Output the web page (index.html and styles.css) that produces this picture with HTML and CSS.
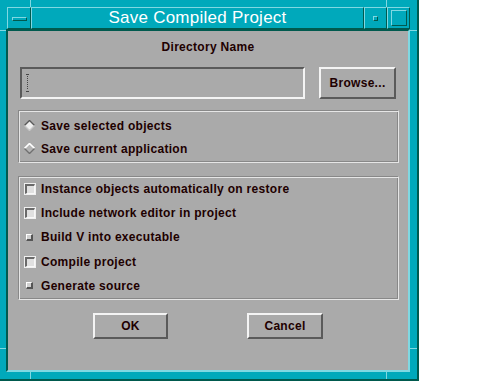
FILE: index.html
```
<!DOCTYPE html>
<html>
<head>
<meta charset="utf-8">
<link rel="stylesheet" href="styles.css">
</head>
<body>
<div class="window">
  <span class="tick tv tl-v"></span>
  <span class="tick th tl-h"></span>
  <span class="tick tv tr-v"></span>
  <span class="tick th tr-h"></span>
  <span class="tick tv bl-v"></span>
  <span class="tick th bl-h"></span>
  <span class="tick tv br-v"></span>
  <span class="tick th br-h"></span>
  <div class="titlebar">
    <div class="tb-btn menu"><span class="menu-bar"></span></div>
    <div class="tb-btn title">Save Compiled Project</div>
    <div class="tb-btn mini"><span class="mini-dot"></span></div>
    <div class="tb-btn maxi"><span class="maxi-box"></span></div>
  </div>
  <div class="panel">
    <div class="dirlabel">Directory Name</div>
    <div class="dirrow">
      <div class="field">
        <svg class="ibeam" width="3" height="18" viewBox="0 0 3 18"><rect x="0" y="0" width="3" height="1" fill="#444"/><rect x="1" y="2" width="1" height="1" fill="#444"/><rect x="1" y="4" width="1" height="1" fill="#444"/><rect x="1" y="6" width="1" height="1" fill="#444"/><rect x="1" y="8" width="1" height="1" fill="#444"/><rect x="1" y="10" width="1" height="1" fill="#444"/><rect x="1" y="12" width="1" height="1" fill="#444"/><rect x="1" y="14" width="1" height="1" fill="#444"/><rect x="0" y="17" width="3" height="1" fill="#444"/></svg>
      </div>
      <div class="btn browse">Browse...</div>
    </div>
    <div class="frame radios">
      <div class="item">
        <svg class="diamond" width="11" height="11" viewBox="0 0 11 11"><polygon points="5.5,0.5 10.5,5.5 5.5,10.5 0.5,5.5" fill="#f0f0f0"/><polyline points="0.5,5.5 5.5,0.5 10.5,5.5" fill="none" stroke="#5a5a5a" stroke-width="1.4"/><polyline points="0.5,5.5 5.5,10.5 10.5,5.5" fill="none" stroke="#c8c8c8" stroke-width="1.4"/></svg>
        <span>Save selected objects</span>
      </div>
      <div class="item">
        <svg class="diamond" width="11" height="11" viewBox="0 0 11 11"><polygon points="5.5,0.5 10.5,5.5 5.5,10.5 0.5,5.5" fill="#b4b4b4"/><polyline points="0.5,5.5 5.5,0.5 10.5,5.5" fill="none" stroke="#ffffff" stroke-width="1.6"/><polyline points="0.5,5.5 5.5,10.5 10.5,5.5" fill="none" stroke="#707070" stroke-width="1.4"/></svg>
        <span>Save current application</span>
      </div>
    </div>
    <div class="frame checks">
      <div class="item"><span class="cb"></span><span>Instance objects automatically on restore</span></div>
      <div class="item"><span class="cb"></span><span>Include network editor in project</span></div>
      <div class="item"><span class="cb on"></span><span>Build V into executable</span></div>
      <div class="item"><span class="cb"></span><span>Compile project</span></div>
      <div class="item"><span class="cb on"></span><span>Generate source</span></div>
    </div>
    <div class="buttons">
      <div class="btn ok">OK</div>
      <div class="btn cancel">Cancel</div>
    </div>
  </div>
</div>
</body>
</html>
```
FILE: styles.css
```
html, body {
  margin: 0;
  padding: 0;
  background: #ffffff;
}
body {
  font-family: "Liberation Sans", Arial, sans-serif;
}
.window {
  position: relative;
  width: 419px;
  height: 381px;
  box-sizing: border-box;
  background: #00a9bb;
  border-right: 2px solid #005a4e;
  border-bottom: 2px solid #005a4e;
  padding: 7px 7px 7px 6px;
  display: flex;
  flex-direction: column;
}
.tick {
  position: absolute;
  background: #80d8e2;
}
.tv { width: 1px; }
.th { height: 1px; }
.tl-v { left: 30px; top: 0; height: 7px; }
.tr-v { left: 386px; top: 0; height: 7px; }
.tl-h { left: 0; top: 30px; width: 6px; }
.tr-h { left: 410px; top: 30px; width: 7px; }
.bl-v { left: 30px; top: 372px; height: 7px; }
.br-v { left: 386px; top: 372px; height: 7px; }
.bl-h { left: 0; top: 348px; width: 6px; }
.br-h { left: 410px; top: 348px; width: 7px; }

.titlebar {
  display: flex;
  height: 22px;
  margin-left: 1px;
  flex: none;
}
.tb-btn {
  box-sizing: border-box;
  height: 22px;
  border-top: 1px solid #80d8e2;
  border-left: 1px solid #80d8e2;
  border-right: 1px solid #005a4e;
  border-bottom: 1px solid #005a4e;
  display: flex;
  align-items: center;
  justify-content: center;
}
.menu { width: 24px; }
.menu-bar {
  width: 15px;
  height: 4px;
  box-sizing: border-box;
  border-top: 1px solid #80d8e2;
  border-left: 1px solid #80d8e2;
  border-right: 1px solid #005a4e;
  border-bottom: 1px solid #005a4e;
  margin-top: 1px;
}
.title {
  flex: 1;
  color: #ffffff;
  font-size: 17px;
  letter-spacing: 0.25px;
  line-height: 20px;
}
.mini { width: 23px; }
.mini-dot {
  width: 5px;
  height: 5px;
  box-sizing: border-box;
  border-top: 1px solid #80d8e2;
  border-left: 1px solid #80d8e2;
  border-right: 1px solid #005a4e;
  border-bottom: 1px solid #005a4e;
  margin-top: 1px;
}
.maxi { width: 23px; }
.maxi-box {
  width: 16px;
  height: 16px;
  box-sizing: border-box;
  border-top: 1px solid #80d8e2;
  border-left: 1px solid #80d8e2;
  border-right: 1px solid #005a4e;
  border-bottom: 1px solid #005a4e;
}

.panel {
  flex: 1;
  box-sizing: border-box;
  background: #aaaaaa;
  border-top: 2px solid #005a4e;
  border-left: 2px solid #005a4e;
  border-right: 2px solid #80d8e2;
  border-bottom: 2px solid #80d8e2;
  display: flex;
  flex-direction: column;
  padding-top: 9px;
  color: #1e0000;
  font-size: 12px;
  font-weight: bold;
  letter-spacing: 0.3px;
}
.dirlabel {
  height: 14px;
  line-height: 14px;
  text-align: center;
}
.dirrow {
  display: flex;
  gap: 14px;
  margin-top: 13px;
  padding-left: 12px;
  height: 32px;
}
.field {
  width: 285px;
  height: 32px;
  box-sizing: border-box;
  border-top: 2px solid #5a5a5a;
  border-left: 2px solid #5a5a5a;
  border-right: 2px solid #f4f4f4;
  border-bottom: 2px solid #f4f4f4;
  display: flex;
  align-items: center;
  padding-left: 4px;
}
.ibeam { display: block; }
.btn {
  box-sizing: border-box;
  border-top: 2px solid #f4f4f4;
  border-left: 2px solid #f4f4f4;
  border-right: 2px solid #5a5a5a;
  border-bottom: 2px solid #5a5a5a;
  display: flex;
  align-items: center;
  justify-content: center;
}
.browse {
  width: 77px;
  height: 32px;
}
.frame {
  box-sizing: border-box;
  margin-left: 10px;
  width: 381px;
  border-top: 1px solid #888888;
  border-left: 1px solid #888888;
  border-right: 1px solid #e6e6e6;
  border-bottom: 1px solid #e6e6e6;
  box-shadow: inset 1px 1px 0 #e6e6e6, inset -1px -1px 0 #888888;
  display: flex;
  flex-direction: column;
  padding-left: 5px;
}
.radios {
  margin-top: 11px;
  height: 53px;
  padding-top: 3px;
}
.radios .item { height: 23px; }
.checks {
  margin-top: 13px;
  height: 124px;
  padding-top: 0;
}
.checks .item { height: 24.2px; }
.item {
  display: flex;
  align-items: center;
}
.diamond {
  display: block;
  margin-right: 6px;
  flex: none;
}
.cb {
  width: 10px;
  height: 10px;
  box-sizing: border-box;
  margin-left: 1px;
  margin-right: 6px;
  flex: none;
  background: #e0e0e0;
  border-top: 2px solid #6a6a6a;
  border-left: 2px solid #6a6a6a;
  border-right: 1px solid #f8f8f8;
  border-bottom: 1px solid #f8f8f8;
  box-shadow: 0 0 0 1px #f0f0f0;
}
.cb.on {
  width: 7px;
  height: 7px;
  margin-left: 2px;
  margin-right: 8px;
  background: #d0d0d0;
  border-top: 1px solid #ffffff;
  border-left: 1px solid #ffffff;
  border-right: 2px solid #555555;
  border-bottom: 2px solid #555555;
  box-shadow: none;
}
.buttons {
  display: flex;
  margin-top: 13px;
  padding-left: 85px;
  gap: 79px;
}
.ok {
  width: 75px;
  height: 26px;
}
.cancel {
  width: 76px;
  height: 26px;
}
```
